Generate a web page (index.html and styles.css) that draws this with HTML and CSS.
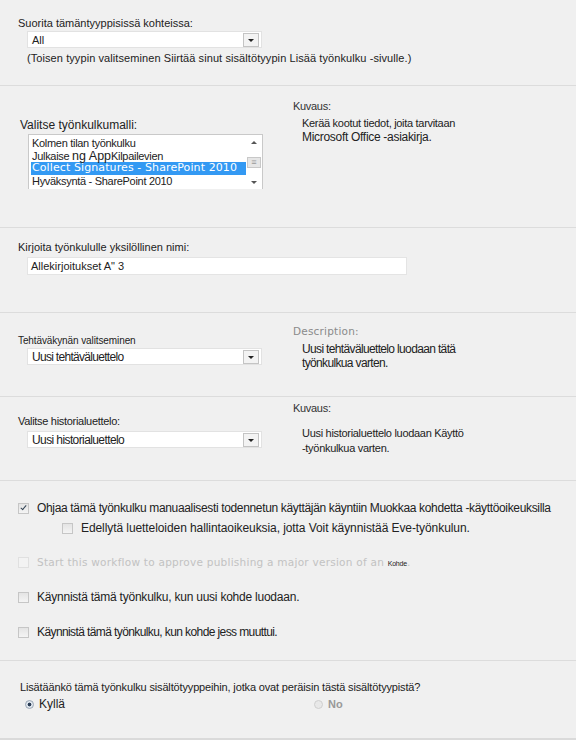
FILE: index.html
```html
<!DOCTYPE html>
<html lang="fi">
<head>
    <meta charset="UTF-8">
    <meta name="viewport" content="width=device-width, initial-scale=1.0">
    <title>Lisää työnkulku</title>
    <link rel="stylesheet" href="styles.css">
</head>
<body>
    <!-- Sisältötyyppi -->
    <div class="sec sec-type">
        <div class="label">Suorita tämäntyyppisissä kohteissa:</div>
        <div class="select"><span>All</span><i class="drop"></i></div>
        <div class="note">(Toisen tyypin valitseminen Siirtää sinut sisältötyypin Lisää työnkulku -sivulle.)</div>
    </div>

    <!-- Työnkulkumalli -->
    <div class="sec split sec-template">
        <div class="left">
            <div class="label">Valitse työnkulkumalli:</div>
            <div class="listbox">
                <div class="items">
                    <div class="item">Kolmen tilan työnkulku</div>
                    <div class="item">Julkaise <span class="odd">ng App</span>Kilpailevien</div>
                    <div class="item selected">Collect Signatures - SharePoint 2010</div>
                    <div class="item last">Hyväksyntä - SharePoint 2010</div>
                </div>
                <div class="scroll">
                    <span class="up"></span>
                    <span class="thumb">≡</span>
                    <span class="down"></span>
                </div>
            </div>
        </div>
        <div class="right">
            <div class="desc-title">Kuvaus:</div>
            <div class="desc">Kerää kootut tiedot, joita tarvitaan</div>
            <div class="desc big">Microsoft Office -asiakirja.</div>
        </div>
    </div>

    <!-- Nimi -->
    <div class="sec sec-name">
        <div class="label">Kirjoita työnkululle yksilöllinen nimi:</div>
        <div class="textbox">Allekirjoitukset A" 3</div>
    </div>

    <!-- Tehtäväluettelo -->
    <div class="sec split sec-task">
        <div class="left">
            <div class="label small">Tehtäväkynän valitseminen</div>
            <div class="select"><span class="big">Uusi tehtäväluettelo</span><i class="drop"></i></div>
        </div>
        <div class="right">
            <div class="desc-title wide">Description:</div>
            <div class="desc big">Uusi tehtäväluettelo luodaan tätä</div>
            <div class="desc big">työnkulkua varten.</div>
        </div>
    </div>

    <!-- Historialuettelo -->
    <div class="sec split sec-history">
        <div class="left">
            <div class="label">Valitse historialuettelo:</div>
            <div class="select"><span class="big">Uusi historialuettelo</span><i class="drop"></i></div>
        </div>
        <div class="right">
            <div class="desc-title">Kuvaus:</div>
            <div class="desc">Uusi historialuettelo luodaan Käyttö</div>
            <div class="desc">-työnkulkua varten.</div>
        </div>
    </div>

    <!-- Käynnistysasetukset -->
    <div class="sec sec-start">
        <div class="check-row r1">
            <span class="box checked"></span>
            <span>Ohjaa tämä työnkulku manuaalisesti todennetun käyttäjän käyntiin Muokkaa kohdetta -käyttöoikeuksilla</span>
        </div>
        <div class="check-row sub">
            <span class="box"></span>
            <span>Edellytä luetteloiden hallintaoikeuksia, jotta Voit käynnistää Eve-työnkulun.</span>
        </div>
        <div class="check-row disabled">
            <span class="box"></span>
            <span>Start this workflow to approve publishing a major version of an <span class="tiny">Kohde</span>.</span>
        </div>
        <div class="check-row r4">
            <span class="box"></span>
            <span>Käynnistä tämä työnkulku, kun uusi kohde luodaan.</span>
        </div>
        <div class="check-row r5">
            <span class="box"></span>
            <span>Käynnistä tämä työnkulku, kun kohde jess muuttui.</span>
        </div>
    </div>

    <!-- Periytyminen -->
    <div class="sec sec-inherit">
        <div class="label">Lisätäänkö tämä työnkulku sisältötyyppeihin, jotka ovat peräisin tästä sisältötyypistä?</div>
        <div class="radios">
            <div class="radio-row"><span class="radio on"></span>Kyllä</div>
            <div class="radio-row disabled"><span class="radio"></span>No</div>
        </div>
    </div>
    <div class="bottom"></div>
</body>
</html>
```

FILE: styles.css
```css
body {
    margin: 0;
    background-color: #f0f0f0;
    font-family: "Liberation Sans", Arial, sans-serif;
    font-size: 11px;
    color: #222;
}
.sec {
    box-sizing: border-box;
    border-bottom: 1px solid #dcdcdc;
    padding-left: 18px;
}
.split {
    display: flex;
}
.left {
    width: 275px;
}
.label {
    line-height: 13px;
}
.label.small {
    font-size: 10px;
    letter-spacing: -0.1px;
}
.big {
    font-size: 12px;
}

/* pudotusvalikko */
.select {
    position: relative;
    box-sizing: border-box;
    width: 235px;
    height: 17px;
    margin-left: 9px;
    background: #fff;
    border: 1px solid #e2e2e2;
    padding: 1px 4px;
    line-height: 14px;
}
.select .big {
    letter-spacing: -0.7px;
}
.drop {
    position: absolute;
    right: 2px;
    top: 1px;
    width: 14px;
    height: 12px;
    border: 1px solid #c4c4c4;
    background: #f3f3f3;
}
.drop::after {
    content: "";
    position: absolute;
    left: 4px;
    top: 5px;
    border-left: 3px solid transparent;
    border-right: 3px solid transparent;
    border-top: 3px solid #222;
}

/* 1 */
.sec-type {
    height: 86px;
    padding-top: 17px;
}
.sec-type .select {
    margin-top: 1px;
}
.note {
    margin: 4px 0 0 9px;
    letter-spacing: 0.08px;
}

/* 2 */
.sec-template {
    height: 142px;
    padding-top: 14px;
}
.sec-template .left {
    padding-top: 19px;
    padding-left: 2px;
    width: 273px;
}
.sec-template .label {
    font-size: 12px;
}
.listbox {
    display: flex;
    box-sizing: border-box;
    width: 235px;
    height: 55px;
    margin: 2px 0 0 8px;
    background: #fff;
    border: 1px solid #c9c9c9;
    border-bottom: none;
    padding: 2px 0 0 2px;
}
.items {
    flex: 1;
}
.item {
    height: 12.5px;
    line-height: 12px;
    padding-left: 1px;
    letter-spacing: -0.3px;
    white-space: nowrap;
}
.item .odd {
    font-size: 12.5px;
    letter-spacing: 0;
}
.item.selected {
    background: #3399f3;
    color: #fff;
    font-family: "DejaVu Sans", Verdana, sans-serif;
    font-size: 11px;
    letter-spacing: 0.1px;
    height: 13px;
}
.item.last {
    background: #fff;
    width: 155px;
}
.scroll {
    display: flex;
    flex-direction: column;
    align-items: center;
    justify-content: space-between;
    width: 16px;
    padding: 4px 0 5px;
    box-sizing: border-box;
}
.scroll .up,
.scroll .down {
    width: 0;
    height: 0;
    border-left: 3px solid transparent;
    border-right: 3px solid transparent;
}
.scroll .up {
    border-bottom: 3px solid #555;
}
.scroll .down {
    border-top: 3px solid #555;
}
.scroll .thumb {
    width: 14px;
    height: 11px;
    background: #e6e6e6;
    border: 1px solid #c8c8c8;
    box-sizing: border-box;
    font-size: 9px;
    line-height: 9px;
    text-align: center;
    color: #999;
}
.desc-title {
    color: #333;
    letter-spacing: -0.3px;
    line-height: 13px;
}
.desc-title.wide {
    font-family: "DejaVu Sans", Verdana, sans-serif;
    font-size: 10.5px;
    color: #8a8a8a;
    letter-spacing: 0.2px;
}
.desc {
    padding-left: 9px;
    line-height: 14px;
    letter-spacing: -0.3px;
}
.desc.big {
    font-size: 12px;
}
.sec-template .desc {
    margin-top: 3px;
}
.sec-template .desc.big {
    margin-top: 0;
}

/* 3 */
.sec-name {
    height: 85px;
    padding-top: 13px;
}
.textbox {
    box-sizing: border-box;
    width: 380px;
    height: 18px;
    margin: 3px 0 0 9px;
    background: #fff;
    border: 1px solid #e4e4e4;
    padding: 1px 3px;
    line-height: 14px;
}

/* 4 */
.sec-task {
    height: 84px;
    padding-top: 12px;
}
.sec-task .left {
    padding-top: 9px;
}
.sec-task .select {
    margin-top: 1px;
}
.sec-task .desc {
    letter-spacing: -0.65px;
}
.sec-task .desc-title {
    margin-bottom: 4px;
}

/* 5 */
.sec-history {
    height: 84px;
    padding-top: 5px;
}
.sec-history .left {
    padding-top: 13px;
}
.sec-history .label {
    letter-spacing: -0.3px;
}
.sec-history .select {
    margin-top: 3px;
}
.sec-history .select .big {
    letter-spacing: -0.6px;
}
.sec-history .desc-title {
    margin-bottom: 11px;
}
.sec-history .desc {
    line-height: 15px;
}

/* 6 */
.sec-start {
    height: 180px;
    padding-top: 20px;
}
.check-row {
    display: flex;
    align-items: center;
    height: 14px;
    font-size: 12px;
}
.check-row.r1 {
    letter-spacing: -0.34px;
}
.check-row.sub {
    margin: 6px 0 0 44px;
    letter-spacing: -0.08px;
}
.check-row.disabled {
    margin-top: 20px;
    color: #c2c2c2;
    font-family: "DejaVu Sans", Verdana, sans-serif;
    font-size: 10.5px;
    letter-spacing: 0.25px;
}
.check-row.r4 {
    margin-top: 21px;
    letter-spacing: -0.23px;
}
.check-row.r5 {
    margin-top: 21px;
    letter-spacing: -0.6px;
}
.tiny {
    font-family: "Liberation Sans", Arial, sans-serif;
    font-size: 7px;
    color: #222;
    letter-spacing: -0.2px;
}
.box {
    position: relative;
    box-sizing: border-box;
    width: 11px;
    height: 11px;
    margin-right: 8px;
    border: 1px solid #c6c6c6;
    background: linear-gradient(#e4e4e4, #f4f4f4);
    flex: none;
}
.disabled .box {
    border-color: #e0e0e0;
    background: #f3f3f3;
}
.box.checked::after {
    content: "";
    position: absolute;
    left: 3px;
    top: 0;
    width: 2px;
    height: 5px;
    border-right: 1.5px solid #345;
    border-bottom: 1.5px solid #345;
    transform: rotate(40deg);
}

/* 7 */
.sec-inherit {
    height: 77px;
    padding-top: 20px;
    padding-left: 20px;
    border-bottom: none;
}
.sec-inherit .label {
    letter-spacing: -0.15px;
}
.radios {
    display: flex;
    margin: 3px 0 0 5px;
}
.radio-row {
    display: flex;
    align-items: center;
    width: 289px;
    font-size: 12px;
}
.radio-row:first-child {
    width: 289px;
    flex: none;
    margin-right: 0;
}
.radio-row.disabled {
    margin-left: 0;
    color: #999;
    font-weight: bold;
    font-size: 11px;
}
.radio {
    box-sizing: border-box;
    width: 9px;
    height: 9px;
    margin-right: 5px;
    border-radius: 50%;
    border: 1px solid #9aa6b4;
    background: radial-gradient(circle, #2b3d55 0 1.6px, #dfe6ee 2.2px);
}
.radio-row.disabled .radio {
    border-color: #cfcfcf;
    background: #e8e8e8;
}
.bottom {
    height: 3px;
    background: #dadada;
}
```
